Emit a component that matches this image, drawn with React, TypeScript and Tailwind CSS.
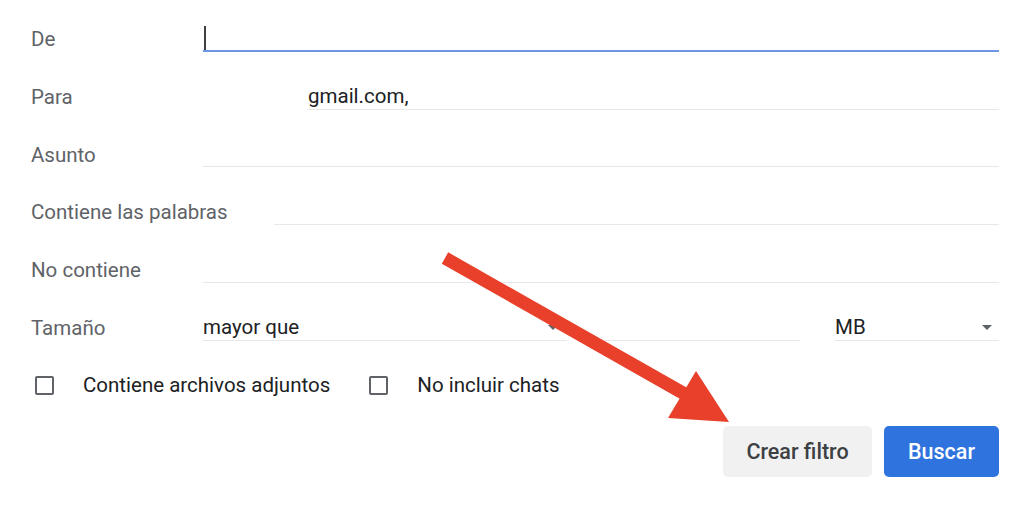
import { ReactNode } from "react";

const font = { fontFamily: "Roboto, 'Liberation Sans', Arial, sans-serif" };

function Row({ label, children }: { label: string; children: ReactNode }) {
  return (
    <div className="flex items-center h-[57.75px]">
      <div className="w-[172px] shrink-0 whitespace-nowrap text-[20.5px] text-[#5f6368] pt-[1px]">{label}</div>
      {children}
    </div>
  );
}

function Field({ className = "", children }: { className?: string; children?: ReactNode }) {
  return (
    <div className={`h-[26px] flex items-center border-b border-[#e8e8e8] text-[20.5px] text-[#202124] ${className}`}>
      {children}
    </div>
  );
}

function Caret() {
  return (
    <span className="w-0 h-0 border-l-[5px] border-r-[5px] border-t-[5px] border-l-transparent border-r-transparent border-t-[#5f6368]" />
  );
}

function Checkbox({ label }: { label: string }) {
  return (
    <div className="flex items-center">
      <span className="w-[19px] h-[19px] border-2 border-[#5f6368] rounded-[2px] ml-[4px]" />
      <span className="ml-[29px] text-[20.5px] text-[#202124]">{label}</span>
    </div>
  );
}

export default function App() {
  return (
    <div className="relative w-[1024px] h-[505px] bg-white overflow-hidden" style={font}>
      <div className="pl-[31px] pr-[25px] pt-[10px]">
        <Row label="De">
          <div className="flex-1 h-[26px] border-b-2 border-[#6d96e6] flex items-end">
            <span className="w-[2px] h-[24px] bg-[#3c4043] ml-[1px]" />
          </div>
        </Row>
        <Row label="Para">
          <div className="w-[105px] shrink-0" />
          <Field className="flex-1">gmail.com,</Field>
        </Row>
        <Row label="Asunto">
          <Field className="flex-1" />
        </Row>
        <Row label="Contiene las palabras">
          <Field className="flex-1 ml-[71px]" />
        </Row>
        <Row label="No contiene">
          <Field className="flex-1" />
        </Row>
        <Row label="Tamaño">
          <Field className="w-[364px] justify-between pr-[9px]">
            <span>mayor que</span>
            <Caret />
          </Field>
          <Field className="w-[222px] ml-[11px]" />
          <Field className="flex-1 ml-[35px] justify-between pr-[7px]">
            <span>MB</span>
            <Caret />
          </Field>
        </Row>
        <div className="flex items-center h-[57.75px] gap-[35px]">
          <Checkbox label="Contiene archivos adjuntos" />
          <Checkbox label="No incluir chats" />
        </div>
        <div className="flex justify-end gap-[12px] mt-[12px]">
          <button className="w-[149px] h-[51px] rounded-[5px] bg-[#f1f1f1] text-[21.5px] font-medium text-[#3c4043]">
            Crear filtro
          </button>
          <button className="w-[115px] h-[51px] rounded-[5px] bg-[#2f73de] text-[21.5px] font-medium text-white">
            Buscar
          </button>
        </div>
      </div>

      <svg className="absolute left-0 top-0 pointer-events-none" width="1024" height="505">
        <line x1="445" y1="258" x2="690" y2="397" stroke="#e8402a" strokeWidth="13" />
        <polygon points="696,371 668,418 729,422" fill="#e8402a" />
      </svg>
    </div>
  );
}
